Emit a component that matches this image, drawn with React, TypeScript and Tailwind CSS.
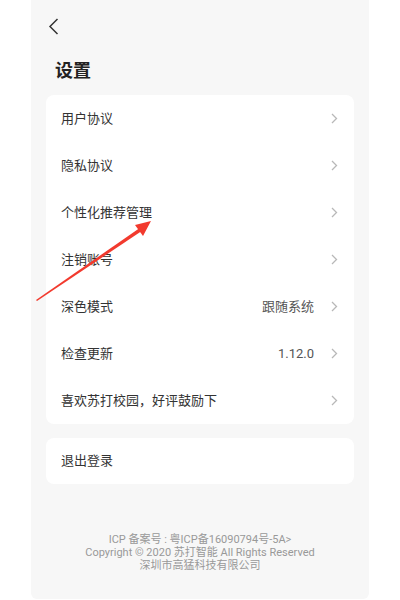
import React from 'react';

interface Row {
  label: string;
  value?: string;
}

const ROWS: Row[] = [
  { label: '用户协议' },
  { label: '隐私协议' },
  { label: '个性化推荐管理' },
  { label: '注销账号' },
  { label: '深色模式', value: '跟随系统' },
  { label: '检查更新', value: '1.12.0' },
  { label: '喜欢苏打校园，好评鼓励下' },
];

const FONT = { fontFamily: 'Roboto, "Noto Sans CJK SC", sans-serif' };

const Chevron = () => (
  <svg width="7" height="11" viewBox="0 0 7 11" className="shrink-0">
    <path d="M1 1 L5.5 5.5 L1 10" fill="none" stroke="#b8b8b8" strokeWidth="1.3" />
  </svg>
);

export default function App() {
  return (
    <div className="relative flex h-[600px] w-[400px] justify-center bg-white" style={FONT}>
      {/* phone screen */}
      <div className="flex h-[599px] w-[338px] flex-col overflow-hidden rounded-b-[6px] bg-[#f7f7f7] px-[15px]">
        <div className="pl-[2px] pt-[18px]">
          <svg width="11" height="17" viewBox="0 0 11 17">
            <path d="M9.5 1 L2 8.5 L9.5 16" fill="none" stroke="#333" strokeWidth="1.5" />
          </svg>
        </div>
        <h1 className="mt-[24px] pl-[9px] text-[18px] font-bold leading-[24px] text-[#222]">设置</h1>

        <div className="mt-[12px] rounded-[8px] bg-white">
          {ROWS.map((row) => (
            <div key={row.label} className="flex h-[47px] items-center pl-[15px] pr-[16px]">
              <span className="flex-1 text-[13px] text-[#333]">{row.label}</span>
              {row.value && <span className="mr-[17px] text-[13px] text-[#555]">{row.value}</span>}
              <Chevron />
            </div>
          ))}
        </div>

        <div className="mt-[14px] flex h-[46px] items-center rounded-[8px] bg-white pl-[15px]">
          <span className="text-[13px] text-[#333]">退出登录</span>
        </div>

        <div className="mt-[49px] flex flex-col items-center text-[11px] leading-[13px] text-[#999]">
          <span>ICP 备案号 : 粤ICP备16090794号-5A&gt;</span>
          <span>Copyright © 2020 苏打智能 All Rights Reserved</span>
          <span>深圳市高猛科技有限公司</span>
        </div>
      </div>

      {/* red annotation arrow */}
      <svg className="pointer-events-none absolute left-0 top-0" width="400" height="600">
        <polygon points="36,300 139,228.5 141,231.5 37,301" fill="#f23a2e" />
        <polygon points="151,221 135,225 143,236" fill="#f23a2e" />
      </svg>
    </div>
  );
}
